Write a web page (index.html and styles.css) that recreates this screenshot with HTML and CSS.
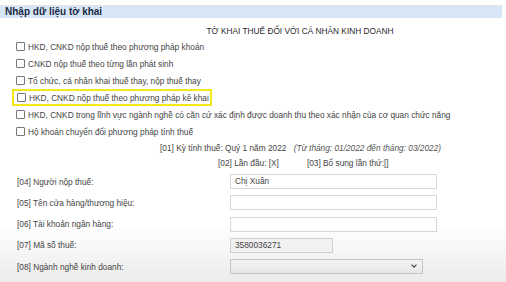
FILE: index.html
```html
<!DOCTYPE html>
<html lang="vi">
<head>
  <meta charset="UTF-8">
  <meta name="viewport" content="width=device-width, initial-scale=1.0">
  <title>Nhập dữ liệu tờ khai</title>
  <link rel="stylesheet" href="styles.css">
</head>
<body>
  <div class="page">
    <div class="panel-head">Nhập dữ liệu tờ khai</div>

    <div class="panel-body">
      <h1 class="form-title">TỜ KHAI THUẾ ĐỐI VỚI CÁ NHÂN KINH DOANH</h1>

      <!-- Loai hinh ke khai -->
      <ul class="options">
        <li><span class="box"></span>HKD, CNKD nộp thuế theo phương pháp khoán</li>
        <li><span class="box"></span>CNKD nộp thuế theo từng lần phát sinh</li>
        <li><span class="box"></span>Tổ chức, cá nhân khai thuế thay, nộp thuế thay</li>
        <li class="marked"><span class="box"></span>HKD, CNKD nộp thuế theo phương pháp kê khai</li>
        <li><span class="box"></span>HKD, CNKD trong lĩnh vực ngành nghề có căn cứ xác định được doanh thu theo xác nhận của cơ quan chức năng</li>
        <li><span class="box"></span>Hộ khoán chuyển đổi phương pháp tính thuế</li>
      </ul>

      <p class="period">[01] Kỳ tính thuế: Quý 1 năm 2022 <em>(Từ tháng: 01/2022 đến tháng: 03/2022)</em></p>
      <p class="times"><span>[02] Lần đầu: [X]</span><span>[03] Bổ sung lần thứ:[]</span></p>

      <!-- Thong tin nguoi nop thue -->
      <div class="fields">
        <label>[04] Người nộp thuế:</label>
        <div class="input wide">Chị Xuân</div>
        <label>[05] Tên cửa hàng/thương hiệu:</label>
        <div class="input wide"></div>
        <label>[06] Tài khoản ngân hàng:</label>
        <div class="input wide"></div>
        <label>[07] Mã số thuế:</label>
        <div class="input short readonly">3580036271</div>
        <label>[08] Ngành nghề kinh doanh:</label>
        <div class="input select"><span class="caret"></span></div>
      </div>
    </div>
  </div>
</body>
</html>
```

FILE: styles.css
```css
body {
  margin: 0;
  font-family: "Liberation Sans", Arial, sans-serif;
  font-size: 8.3px;
  line-height: 10px;
  color: #444;
  background: #fff;
}
.page {
  height: 282px;
  padding-top: 5px;
  box-sizing: border-box;
  background: linear-gradient(to bottom, #fff 0, #fff 225px, #ebebeb 282px);
}
.panel-head {
  width: 497px;
  height: 12px;
  line-height: 12px;
  padding-left: 5px;
  border-top: 1px solid #e4e4e4;
  background-color: #d7e7f8;
  color: #1c2a44;
  font-size: 10px;
  font-weight: bold;
}
.panel-body {
  padding: 0 0 0 16px;
}
.form-title {
  margin: 8px 0 2px;
  padding-left: 78px;
  text-align: center;
  font-size: 8.3px;
  font-weight: normal;
  color: #2a2a2a;
}
.options {
  list-style: none;
  margin: 0;
  padding: 0;
}
.options li {
  display: flex;
  align-items: center;
  height: 17px;
  white-space: nowrap;
}
.box {
  flex-shrink: 0;
  width: 7px;
  height: 7px;
  margin-right: 3px;
  border: 1px solid #777;
  border-radius: 1px;
  background: #fff;
}
.options .marked {
  width: 193px;
  height: 13px;
  margin-left: -4px;
  padding-left: 3px;
  border: 2px solid #f2e81c;
}
.period {
  margin: 3px 0 0 144px;
}
.period em {
  margin-left: 5px;
  color: #555;
}
.times {
  display: flex;
  gap: 28px;
  margin: 5px 0 0 202px;
}
.fields {
  display: grid;
  grid-template-columns: 214px auto;
  justify-content: start;
  align-items: center;
  row-gap: 6.25px;
  margin-top: 6px;
}
.fields label {
  padding-left: 1px;
}
.input {
  height: 15px;
  line-height: 13px;
  padding-left: 4px;
  border: 1px solid #d6d6d6;
  background: #fff;
  box-sizing: border-box;
}
.wide {
  width: 207px;
}
.short {
  width: 103px;
}
.readonly {
  background: #f1f1f1;
  border-color: #cfcfcf;
}
.select {
  position: relative;
  width: 193px;
  background: linear-gradient(#f4f4f4, #e6e6e6);
  border-color: #c4c4c4;
}
.caret {
  position: absolute;
  right: 6px;
  top: 3px;
  width: 3px;
  height: 3px;
  border-right: 1.5px solid #333;
  border-bottom: 1.5px solid #333;
  transform: rotate(45deg);
}
```
